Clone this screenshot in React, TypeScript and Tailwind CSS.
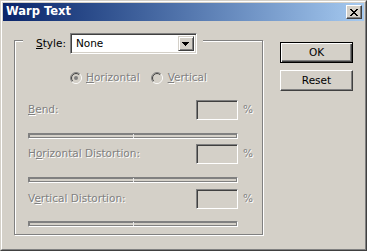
import React from "react";

const dis = "text-[#808080] [text-shadow:1px_1px_0_#ffffff]";

function U({ children }: { children: React.ReactNode }) {
  return <span className="underline underline-offset-[1px] decoration-1">{children}</span>;
}

function Radio({ checked }: { checked?: boolean }) {
  const r1 = 5.5;
  const r2 = 4.5;
  const a1 = r1 * 0.7071;
  const a2 = r2 * 0.7071;
  return (
    <svg width="12" height="12" viewBox="0 0 12 12" className="shrink-0">
      <circle cx="6" cy="6" r="4" fill="#d4d0c8" />
      <path d={`M ${6 - a1} ${6 + a1} A ${r1} ${r1} 0 0 1 ${6 + a1} ${6 - a1}`} stroke="#808080" fill="none" strokeWidth="1" />
      <path d={`M ${6 + a1} ${6 - a1} A ${r1} ${r1} 0 0 1 ${6 - a1} ${6 + a1}`} stroke="#ffffff" fill="none" strokeWidth="1" />
      <path d={`M ${6 - a2} ${6 + a2} A ${r2} ${r2} 0 0 1 ${6 + a2} ${6 - a2}`} stroke="#404040" fill="none" strokeWidth="1" />
      <path d={`M ${6 + a2} ${6 - a2} A ${r2} ${r2} 0 0 1 ${6 - a2} ${6 + a2}`} stroke="#d4d0c8" fill="none" strokeWidth="1" />
      {checked && <circle cx="6" cy="6" r="2" fill="#808080" />}
    </svg>
  );
}

function Field() {
  return (
    <div className="w-[42px] h-[20px] bg-[#d4d0c8] border border-t-[#808080] border-l-[#808080] border-r-white border-b-white shadow-[inset_1px_1px_0_#404040,inset_-1px_-1px_0_#d4d0c8]" />
  );
}

function Track() {
  return (
    <div className="relative w-[210px] h-[6px] bg-[#d4d0c8] border border-t-[#808080] border-l-[#808080] border-r-white border-b-white shadow-[inset_1px_1px_0_#808080,inset_-1px_-1px_0_#808080]">
      <div className="absolute left-[104px] top-0 w-px h-full bg-[#e8e8e8]" />
    </div>
  );
}

function Row({ label }: { label: React.ReactNode }) {
  return (
    <div className="flex items-center h-[20px]">
      <div className={`w-[168px] ${dis}`}>{label}</div>
      <Field />
      <div className={`ml-[5px] ${dis}`}>%</div>
    </div>
  );
}

function CloseGlyph() {
  const rows = [
    "XX....XX",
    ".XX..XX.",
    "..XXXX..",
    "...XX...",
    "..XXXX..",
    ".XX..XX.",
    "XX....XX",
  ];
  return (
    <svg width="8" height="7" viewBox="0 0 8 7" shapeRendering="crispEdges">
      {rows.map((r, y) =>
        r.split("").map((c, x) => (c === "X" ? <rect key={`${x}-${y}`} x={x} y={y} width="1" height="1" fill="#000" /> : null))
      )}
    </svg>
  );
}

export default function App() {
  return (
    <div
      className="w-[367px] h-[251px] bg-[#d4d0c8] border border-t-[#d4d0c8] border-l-[#d4d0c8] border-r-[#404040] border-b-[#404040] text-[10.5px] text-black"
      style={{ fontFamily: '"DejaVu Sans", sans-serif' }}
    >
      <div className="h-full flex flex-col border border-t-white border-l-white border-r-[#808080] border-b-[#808080] p-px">
        {/* Title bar */}
        <div className="h-[18px] shrink-0 flex items-center justify-between pl-[3px] pr-[2px] bg-gradient-to-r from-[#0a246a] to-[#a6caf0]">
          <span className="text-white font-bold text-[11.5px] leading-none">Warp Text</span>
          <div className="w-[16px] h-[14px] flex items-center justify-center bg-[#d4d0c8] border border-t-white border-l-white border-r-[#404040] border-b-[#404040] shadow-[inset_-1px_-1px_0_#808080]">
            <CloseGlyph />
          </div>
        </div>

        {/* Content */}
        <div className="flex-1 flex items-start pl-[11px] pt-[19px]">
          {/* Group box */}
          <div className="relative w-[249px] h-[195px] border border-[#808080] shadow-[inset_1px_1px_0_#ffffff,1px_1px_0_#ffffff]">
            <div className="absolute left-[8px] top-[-8px] flex items-center gap-[4px] pl-[13px] pr-[6px] bg-[#d4d0c8]">
              <span>
                <U>S</U>tyle:
              </span>
              <div className="relative w-[127px] h-[21px] bg-white border border-t-[#808080] border-l-[#808080] border-r-white border-b-white shadow-[inset_1px_1px_0_#404040,inset_-1px_-1px_0_#d4d0c8] flex items-center pl-[5px]">
                <span>None</span>
                <div className="absolute right-[2px] top-[2px] w-[16px] h-[15px] bg-[#d4d0c8] border border-t-[#d4d0c8] border-l-[#d4d0c8] border-r-[#404040] border-b-[#404040] shadow-[inset_1px_1px_0_#ffffff,inset_-1px_-1px_0_#808080] flex items-center justify-center">
                  <svg width="7" height="4" viewBox="0 0 7 4" shapeRendering="crispEdges">
                    <rect x="0" y="0" width="7" height="1" fill="#000" />
                    <rect x="1" y="1" width="5" height="1" fill="#000" />
                    <rect x="2" y="2" width="3" height="1" fill="#000" />
                    <rect x="3" y="3" width="1" height="1" fill="#000" />
                  </svg>
                </div>
              </div>
            </div>

            <div className="flex flex-col pt-[31px]">
              <div className="flex items-center h-[12px] ml-[55px]">
                <Radio checked />
                <span className={`ml-[4px] ${dis}`}>
                  <U>H</U>orizontal
                </span>
                <span className="ml-[11px]">
                  <Radio />
                </span>
                <span className={`ml-[5px] ${dis}`}>
                  <U>V</U>ertical
                </span>
              </div>

              <div className="pl-[13px] flex flex-col">
                <div className="mt-[16px]">
                  <Row
                    label={
                      <>
                        <U>B</U>end:
                      </>
                    }
                  />
                </div>
                <div className="mt-[13px]">
                  <Track />
                </div>
                <div className="mt-[5px]">
                  <Row
                    label={
                      <>
                        H<U>o</U>rizontal Distortion:
                      </>
                    }
                  />
                </div>
                <div className="mt-[13px]">
                  <Track />
                </div>
                <div className="mt-[6px]">
                  <Row
                    label={
                      <>
                        V<U>e</U>rtical Distortion:
                      </>
                    }
                  />
                </div>
                <div className="mt-[12px]">
                  <Track />
                </div>
              </div>
            </div>
          </div>

          {/* Buttons */}
          <div className="ml-[17px] mt-[2px] flex flex-col gap-[7px]">
            <div className="w-[73px] h-[21px] flex items-center justify-center bg-[#d4d0c8] border border-black shadow-[inset_1px_1px_0_#ffffff,inset_-1px_-1px_0_#404040,inset_-2px_-2px_0_#808080]">
              OK
            </div>
            <div className="w-[73px] h-[21px] flex items-center justify-center bg-[#d4d0c8] border border-t-white border-l-white border-r-[#404040] border-b-[#404040] shadow-[inset_-1px_-1px_0_#808080]">
              Reset
            </div>
          </div>
        </div>
      </div>
    </div>
  );
}
